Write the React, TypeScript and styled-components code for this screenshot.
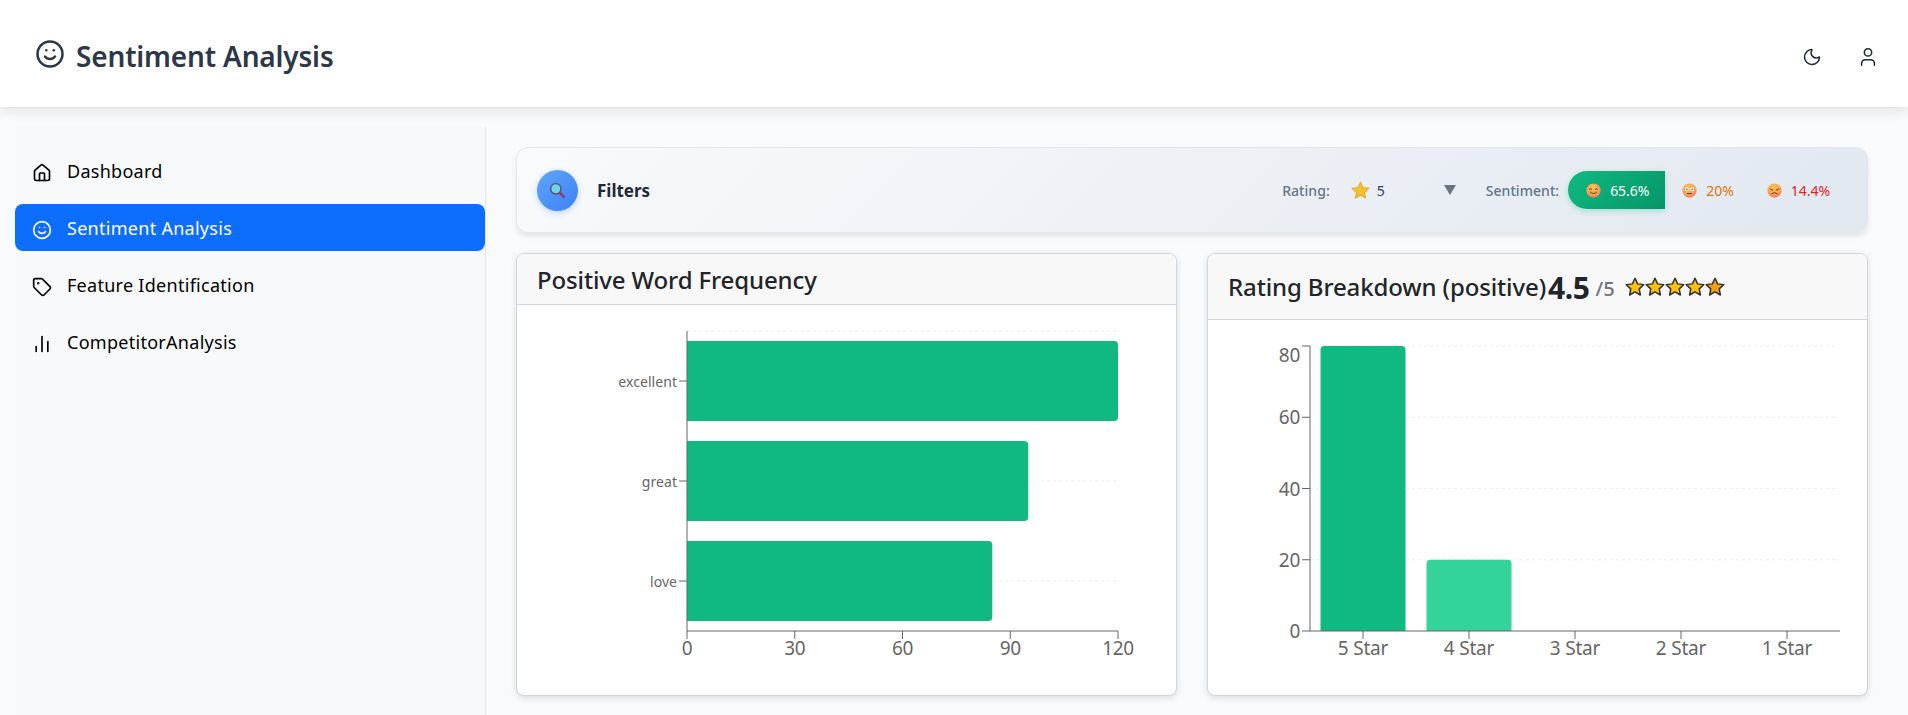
import React, { ReactElement } from 'react';
import styled, { createGlobalStyle } from 'styled-components';
import { Home, Smile, Tag, Moon, User, BarChart2 } from 'lucide-react';

const GlobalStyle = createGlobalStyle`
  * {
    box-sizing: border-box;
  }
  html, body {
    margin: 0;
    height: 715px;
    overflow: hidden;
    background: #f8fafc;
    font-family: "Noto Sans", "Open Sans", sans-serif;
  }
`;

const Page = styled.div`
  display: flex;
  flex-direction: column;
  height: 715px;
`;

const TopBar = styled.header`
  display: flex;
  align-items: center;
  justify-content: space-between;
  height: 107px;
  padding: 0 29px 0 35px;
  background: #fff;
  box-shadow: 0 4px 12px rgba(0, 0, 0, 0.1);
  position: relative;
`;

const Brand = styled.h1`
  display: flex;
  align-items: center;
  gap: 11px;
  margin: 1px 0 0;
  font-size: 28px;
  font-weight: 600;
  letter-spacing: -0.17px;
  color: #2d3748;
`;

const BrandText = styled.span`
  margin-top: 3px;
`;

const TopActions = styled.div`
  display: flex;
  align-items: center;
  gap: 35px;
  margin-top: 7px;
  color: #1f2937;
`;

const Body = styled.div`
  display: flex;
  flex: 1;
  min-height: 0;
  padding-top: 20px;
`;

const Sidebar = styled.nav`
  display: flex;
  flex-direction: column;
  gap: 10px;
  width: 471px;
  margin-left: 15px;
  padding-top: 20px;
  background: #f8f9fa;
  border-right: 1px solid #e2e8f0;
`;

const NavItem = styled.a<{ $active?: boolean }>`
  display: flex;
  align-items: center;
  gap: 15px;
  height: 47px;
  padding: 0 17px;
  border-radius: 8px;
  font-size: 18px;
  letter-spacing: 0.28px;
  color: ${(p) => (p.$active ? '#fff' : '#000')};
  background: ${(p) => (p.$active ? '#0d6efd' : 'transparent')};
  svg {
    flex: none;
    margin-top: 4px;
  }
`;

const Main = styled.main`
  flex: 1;
  min-width: 0;
  padding: 20px 40px 0 30px;
`;

const FilterBar = styled.section`
  display: flex;
  align-items: center;
  height: 86px;
  padding: 0 21px 0 20px;
  border: 1px solid #e2e8f0;
  border-radius: 12px;
  background: linear-gradient(135deg, #f8fafc 0%, #e2e8f0 100%);
  box-shadow: 0 4px 6px -1px rgba(0, 0, 0, 0.1);
`;

const FilterBadge = styled.div`
  display: flex;
  align-items: center;
  justify-content: center;
  width: 41px;
  height: 41px;
  border-radius: 50%;
  background: linear-gradient(135deg, #60a5fa, #3b82f6);
  box-shadow: 0 2px 6px rgba(59, 130, 246, 0.3);
`;

const FilterTitle = styled.span`
  margin-left: 19px;
  margin-right: auto;
  font-size: 17px;
  font-weight: 700;
  color: #1e293b;
`;

const FilterLabel = styled.span`
  font-size: 14px;
  font-weight: 500;
  letter-spacing: 0.05px;
  color: #64748b;
`;

const RatingSelect = styled.div`
  display: flex;
  align-items: center;
  width: 141px;
  padding-left: 21px;
  margin-right: 15px;
  font-size: 14px;
  color: #374151;
`;

const RatingValue = styled.span`
  margin-left: 7px;
  margin-right: auto;
`;

const Caret = styled.span`
  width: 0;
  height: 0;
  margin-right: 15px;
  border-left: 6px solid transparent;
  border-right: 6px solid transparent;
  border-top: 10px solid #6b7280;
`;

const SentimentPill = styled.div<{ $tone: string; $active?: boolean }>`
  display: flex;
  align-items: center;
  gap: 9px;
  height: 38px;
  padding: 0 16px 0 ${(p) => (p.$active ? '18px' : '17px')};
  font-size: 14px;
  letter-spacing: -0.05px;
  color: ${(p) => (p.$active ? '#fff' : p.$tone)};
  ${(p) =>
    p.$active &&
    `
    background: linear-gradient(135deg, #10b981, #059669);
    border-radius: 20px 0 0 20px;
    box-shadow: 0 2px 6px rgba(16, 185, 129, 0.3);
  `}
`;

const SentimentGroup = styled.div`
  display: flex;
  align-items: center;
  margin-left: 9px;
`;

const CardGrid = styled.div`
  display: grid;
  grid-template-columns: 1fr 1fr;
  gap: 30px;
  margin-top: 20px;
`;

const Card = styled.article`
  height: 443px;
  border: 1px solid #d3d5d8;
  border-radius: 8px;
  background: #fff;
  box-shadow: 0 2px 6px rgba(0, 0, 0, 0.12);
  overflow: hidden;
`;

const CardHeader = styled.div<{ $tall?: boolean }>`
  display: flex;
  align-items: center;
  height: ${(p) => (p.$tall ? '66px' : '51px')};
  padding: 0 20px;
  background: #f8f8f8;
  border-bottom: 1px solid #d3d5d8;
`;

const CardTitle = styled.h2`
  margin: 0;
  font-size: 24px;
  font-weight: 500;
  letter-spacing: -0.13px;
  color: #212529;
`;

const Score = styled.span`
  margin: 1px 0 0 2px;
  font-size: 30px;
  font-weight: 700;
  letter-spacing: -0.4px;
  color: #212529;
`;

const ScoreMax = styled.span`
  margin-left: 6px;
  margin-top: 3px;
  font-size: 20px;
  font-weight: 500;
  color: #6c757d;
`;

const StarRow = styled.div`
  display: flex;
  margin-left: 10px;
`;

const TickText = styled.text<{ $size: number }>`
  font-family: "Noto Sans", sans-serif;
  font-size: ${(p) => p.$size}px;
  fill: #666;
`;

const ChartSvg = styled.svg`
  display: block;
`;

const FaceBase = ({ children }: { children: React.ReactNode }): ReactElement => (
  <svg width="15" height="15" viewBox="0 0 16 16">
    <defs>
      <radialGradient id="faceFill" cx="0.45" cy="0.3" r="0.8">
        <stop offset="0" stopColor="#fcc24f" />
        <stop offset="0.6" stopColor="#f9a04f" />
        <stop offset="1" stopColor="#ee6a55" />
      </radialGradient>
    </defs>
    <circle cx="8" cy="8" r="7.6" fill="url(#faceFill)" />
    {children}
  </svg>
);

const HappyFace = (): ReactElement => (
  <FaceBase>
    <path d="M3.6 6.6q1.2-1.2 2.4 0M10 6.6q1.2-1.2 2.4 0M4.6 9.8q3.4 3 6.8 0" fill="none" stroke="#5b3a2a" strokeWidth="1" strokeLinecap="round" />
  </FaceBase>
);

const NeutralFace = (): ReactElement => (
  <FaceBase>
    <circle cx="5.2" cy="6.6" r="2" fill="#fff" />
    <circle cx="10.8" cy="6.6" r="2" fill="#fff" />
    <circle cx="5.2" cy="6.6" r="0.8" fill="#4a3328" />
    <circle cx="10.8" cy="6.6" r="0.8" fill="#4a3328" />
    <path d="M5.8 11.2h4.4" fill="none" stroke="#5b3a2a" strokeWidth="1" strokeLinecap="round" />
  </FaceBase>
);

const SadFace = (): ReactElement => (
  <FaceBase>
    <path d="M3.6 6.4l2.6 1.2M12.4 6.4l-2.6 1.2M5 11.4q3-2.6 6 0" fill="none" stroke="#5b3a2a" strokeWidth="1" strokeLinecap="round" />
  </FaceBase>
);

const MagnifierIcon = (): ReactElement => (
  <svg width="17" height="17" viewBox="0 0 16 16">
    <path d="M9.6 9.6l4.4 4.4" stroke="#8e3b74" strokeWidth="2.6" strokeLinecap="round" />
    <circle cx="6.4" cy="6.4" r="4.9" fill="#6fd6e8" stroke="#5b4a78" strokeWidth="1.3" />
  </svg>
);

const STAR_PATH = 'M8 1l2.1 4.5 4.9.6-3.6 3.4.9 4.9L8 11.9l-4.3 2.5.9-4.9L1 6.1l4.9-.6z';

const RatingStarIcon = (): ReactElement => (
  <svg width="19" height="19" viewBox="0 0 16 16">
    <path d={STAR_PATH} fill="#f2c230" stroke="#e8ae2a" strokeWidth="1" strokeLinejoin="round" />
  </svg>
);

const OutlinedStar = ({ fill }: { fill: string }): ReactElement => (
  <svg width="20" height="20" viewBox="0 0 16 16">
    <path d={STAR_PATH} fill={fill} stroke="#2f3136" strokeWidth="1.2" strokeLinejoin="round" />
  </svg>
);

const wordBars = [
  { label: 'excellent', value: 120, y: 341 },
  { label: 'great', value: 95, y: 441 },
  { label: 'love', value: 85, y: 541 },
];

// both charts share the same page-pixel origin, offset by the svg position
const WordChart = (): ReactElement => {
  const ox = 517;
  const oy = 305;
  const left = 687 - ox;
  const right = 1118 - ox;
  const top = 331 - oy;
  const bottom = 631 - oy;
  const scale = (right - left) / 120;
  return (
    <ChartSvg width="659" height="390">
      {[top, 381 - oy, 481 - oy, 581 - oy].map((y) => (
        <line key={y} x1={left} x2={right} y1={y} y2={y} stroke="#eee" strokeWidth="1" strokeDasharray="3 3" />
      ))}
      {wordBars.map((b) => (
        <g key={b.label}>
          <rect x={left} y={b.y - oy} width={b.value * scale} height={80} rx={4} fill="#10b981" />
          <rect x={left} y={b.y - oy} width={6} height={80} fill="#10b981" />
          <line x1={left - 8} x2={left} y1={b.y - oy + 40} y2={b.y - oy + 40} stroke="#666" />
          <TickText $size={14} x={left - 10} y={b.y - oy + 46} textAnchor="end" letterSpacing="0.05">
            {b.label}
          </TickText>
        </g>
      ))}
      <line x1={left} x2={left} y1={top} y2={bottom} stroke="#666" strokeWidth="1" />
      <line x1={left} x2={right} y1={bottom} y2={bottom} stroke="#666" strokeWidth="1" />
      {[0, 30, 60, 90, 120].map((t) => (
        <g key={t}>
          <line x1={left + t * scale} x2={left + t * scale} y1={bottom} y2={bottom + 8} stroke="#666" />
          <TickText $size={19} x={left + t * scale} y={bottom + 24} textAnchor="middle" letterSpacing="-0.3">
            {t}
          </TickText>
        </g>
      ))}
    </ChartSvg>
  );
};

const starBars = [
  { label: '5 Star', value: 80, fill: '#10b981' },
  { label: '4 Star', value: 20, fill: '#34d399' },
  { label: '3 Star', value: 0, fill: '#fbbf24' },
  { label: '2 Star', value: 0, fill: '#f97316' },
  { label: '1 Star', value: 0, fill: '#ef4444' },
];

const RatingChart = (): ReactElement => {
  const ox = 1208;
  const oy = 320;
  const left = 1310 - ox;
  const right = 1840 - ox;
  const top = 346 - oy;
  const bottom = 631 - oy;
  const band = (right - left) / 5;
  const unit = (bottom - top) / 80;
  return (
    <ChartSvg width="659" height="375">
      {[80, 60, 40, 20].map((t) => (
        <line key={t} x1={left} x2={right - 1} y1={bottom - t * unit} y2={bottom - t * unit} stroke="#eee" strokeDasharray="3 3" />
      ))}
      {starBars.map((b, i) => {
        const h = b.value * unit;
        const x = left + band * i + 10.5;
        return (
          <g key={b.label}>
            {h > 0 && (
              <path
                d={`M${x} ${bottom}V${bottom - h + 4}q0-4 4-4H${x + 81}q4 0 4 4V${bottom}z`}
                fill={b.fill}
              />
            )}
            <line x1={left + band * (i + 0.5)} x2={left + band * (i + 0.5)} y1={bottom} y2={bottom + 8} stroke="#666" />
            <TickText $size={19} x={left + band * (i + 0.5)} y={bottom + 24} textAnchor="middle" letterSpacing="-0.2">
              {b.label}
            </TickText>
          </g>
        );
      })}
      <line x1={left} x2={left} y1={top} y2={bottom} stroke="#666" />
      <line x1={left} x2={right} y1={bottom} y2={bottom} stroke="#666" />
      {[0, 20, 40, 60, 80].map((t) => (
        <g key={t}>
          <line x1={left - 8} x2={left} y1={bottom - t * unit} y2={bottom - t * unit} stroke="#666" />
          <TickText $size={19} x={left - 10} y={bottom - t * unit + (t === 80 ? 16 : 7)} textAnchor="end" letterSpacing="-0.3">
            {t}
          </TickText>
        </g>
      ))}
    </ChartSvg>
  );
};

const App = (): ReactElement => (
  <Page>
    <GlobalStyle />
    <TopBar>
      <Brand>
        <Smile size={30} strokeWidth={2} />
        <BrandText>Sentiment Analysis</BrandText>
      </Brand>
      <TopActions>
        <Moon size={20} strokeWidth={1.8} />
        <User size={22} strokeWidth={1.7} />
      </TopActions>
    </TopBar>
    <Body>
      <Sidebar>
        <NavItem>
          <Home size={20} />
          Dashboard
        </NavItem>
        <NavItem $active>
          <Smile size={20} />
          Sentiment Analysis
        </NavItem>
        <NavItem>
          <Tag size={20} />
          Feature Identification
        </NavItem>
        <NavItem>
          <BarChart2 size={20} />
          CompetitorAnalysis
        </NavItem>
      </Sidebar>
      <Main>
        <FilterBar>
          <FilterBadge>
            <MagnifierIcon />
          </FilterBadge>
          <FilterTitle>Filters</FilterTitle>
          <FilterLabel>Rating:</FilterLabel>
          <RatingSelect>
            <RatingStarIcon />
            <RatingValue>5</RatingValue>
            <Caret />
          </RatingSelect>
          <FilterLabel>Sentiment:</FilterLabel>
          <SentimentGroup>
            <SentimentPill $tone="#fff" $active>
              <HappyFace />
              65.6%
            </SentimentPill>
            <SentimentPill $tone="#d97706">
              <NeutralFace />
              20%
            </SentimentPill>
            <SentimentPill $tone="#dc2626">
              <SadFace />
              14.4%
            </SentimentPill>
          </SentimentGroup>
        </FilterBar>
        <CardGrid>
          <Card>
            <CardHeader>
              <CardTitle>Positive Word Frequency</CardTitle>
            </CardHeader>
            <WordChart />
          </Card>
          <Card>
            <CardHeader $tall>
              <CardTitle>Rating Breakdown (positive)</CardTitle>
              <Score>4.5</Score>
              <ScoreMax>/5</ScoreMax>
              <StarRow>
                <OutlinedStar fill="#ffc107" />
                <OutlinedStar fill="#ffc107" />
                <OutlinedStar fill="#ffc107" />
                <OutlinedStar fill="#ffc107" />
                <OutlinedStar fill="#f59e0b" />
              </StarRow>
            </CardHeader>
            <RatingChart />
          </Card>
        </CardGrid>
      </Main>
    </Body>
  </Page>
);

export default App;
